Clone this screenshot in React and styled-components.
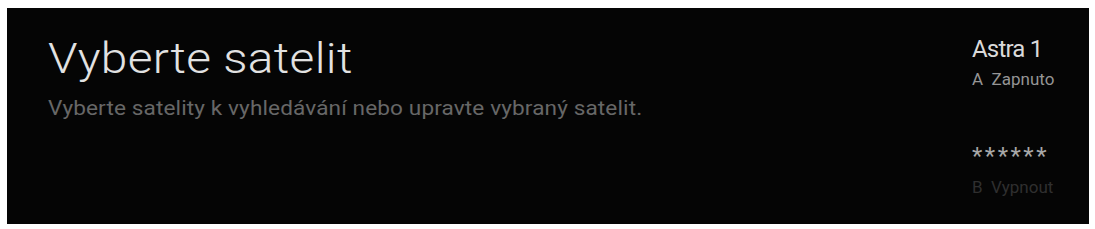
import React from "react";
import styled, { createGlobalStyle } from "styled-components";

const Global = createGlobalStyle`
  html, body { margin: 0; padding: 0; background: #ffffff; }
  body { font-family: Roboto, "Noto Sans", sans-serif; }
`;

const Page = styled.div`
  padding: 8px 6px 5px 7px;
  box-sizing: border-box;
  width: 1095px;
  height: 229px;
`;

const Panel = styled.div`
  background: #050505;
  height: 216px;
  display: flex;
  justify-content: space-between;
  padding: 0 0 0 41px;
  box-sizing: border-box;
`;

const Main = styled.div`
  display: flex;
  flex-direction: column;
  align-items: flex-start;
  padding-top: 26px;
`;

const Title = styled.h1`
  margin: 0;
  font-family: Roboto, sans-serif;
  font-weight: 300;
  font-size: 42px;
  line-height: 50px;
  color: #e2e2e2;
  letter-spacing: 0.3px;
  white-space: nowrap;
  transform: scaleX(1.14);
  transform-origin: left center;
`;

const Subtitle = styled.p`
  margin: 12px 0 0;
  font-family: Roboto, sans-serif;
  font-weight: 400;
  font-size: 20px;
  line-height: 24px;
  color: #676767;
  letter-spacing: 0.1px;
  white-space: nowrap;
  transform: scaleX(1.13);
  transform-origin: left center;
`;

const Side = styled.div`
  width: 117px;
  display: flex;
  flex-direction: column;
  padding-top: 26px;
  box-sizing: border-box;
`;

const Option = styled.div`
  display: flex;
  flex-direction: column;
  margin-bottom: ${(p) => p.gap || 0}px;
`;

const OptionName = styled.div`
  font-family: Roboto, sans-serif;
  font-size: 24px;
  line-height: 30px;
  color: ${(p) => p.color};
  letter-spacing: ${(p) => p.spacing || 0}px;
  white-space: nowrap;
`;

const OptionState = styled.div`
  margin-top: ${(p) => p.offset}px;
  font-family: Roboto, sans-serif;
  font-size: 17px;
  line-height: 20px;
  color: ${(p) => p.color};
  white-space: pre;
`;

export default function App() {
  return (
    <>
      <Global />
      <Page>
        <Panel>
          <Main>
            <Title>Vyberte satelit</Title>
            <Subtitle>Vyberte satelity k vyhledávání nebo upravte vybraný satelit.</Subtitle>
          </Main>
          <Side>
            <Option gap={52}>
              <OptionName color="#dadada" spacing={-0.8}>Astra 1</OptionName>
              <OptionState offset={5} color="#959595">A  Zapnuto</OptionState>
            </Option>
            <Option>
              <OptionName color="#a8a8a8" spacing={2.5}>******</OptionName>
              <OptionState offset={6} color="#2f2f2f">B  Vypnout</OptionState>
            </Option>
          </Side>
        </Panel>
      </Page>
    </>
  );
}
